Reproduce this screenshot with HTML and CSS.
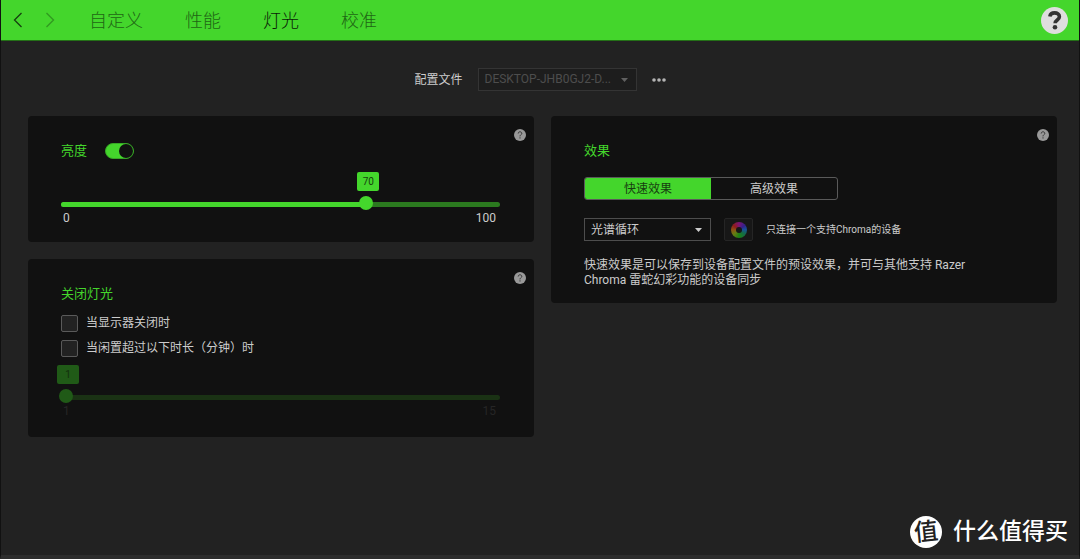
FILE: index.html
```html
<!DOCTYPE html>
<html lang="zh-CN">
<head>
<meta charset="utf-8">
<meta name="viewport" content="width=device-width, initial-scale=1">
<title>灯光</title>
<link rel="stylesheet" href="styles.css">
</head>
<body>
<div class="app">
  <header class="topbar">
    <button class="nav-arrow" type="button" aria-label="后退"><svg width="10" height="16" viewBox="0 0 10 16"><path d="M8.500 1 1.500 8l7 7"/></svg></button>
    <button class="nav-arrow" type="button" aria-label="前进" disabled><svg width="10" height="16" viewBox="0 0 10 16"><path d="M1.500 1l7 7-7 7"/></svg></button>
    <nav class="tabs">
      <a class="tab" href="#custom">自定义</a>
      <a class="tab" href="#performance">性能</a>
      <a class="tab tab-active" href="#lighting" aria-current="page">灯光</a>
      <a class="tab" href="#calibration">校准</a>
    </nav>
    <button class="help-main" type="button" aria-label="帮助"><svg width="27" height="27" viewBox="0 0 27 27"><circle cx="13.500" cy="13.500" r="13.500" fill="#dedede"/><path d="M8.800 9.500C9.300 7 11 5.900 13.500 5.900c2.900 0 4.900 1.500 4.900 3.800 0 3.300-4.300 3.200-4.300 6.600" fill="none" stroke="#333" stroke-width="3.600"/><circle cx="14" cy="20.300" r="2.300" fill="#333"/></svg></button>
  </header>

  <main class="content">
    <div class="profile">
      <label for="profile">配置文件</label>
      <div class="select select-profile">
        <select id="profile" disabled><option>DESKTOP-JHB0GJ2-D...</option></select>
        <svg class="caret" width="7" height="4" viewBox="0 0 7 4"><path d="M0 0h7L3.500 4z"/></svg>
      </div>
      <button class="more" type="button" aria-label="更多"><svg width="14" height="4" viewBox="0 0 14 4"><circle cx="2" cy="2" r="1.800"/><circle cx="7" cy="2" r="1.800"/><circle cx="12" cy="2" r="1.800"/></svg></button>
    </div>

    <div class="columns">
      <div class="column">
        <section class="card">
          <button class="help" type="button" aria-label="亮度帮助"><svg width="12" height="12" viewBox="0 0 12 12"><circle cx="6" cy="6" r="6"/><path d="M4.200 4.500C4.300 3.300 5 2.800 6 2.800s1.800.6 1.800 1.600C7.800 5.600 6 5.700 6 7.400M6 8.300v1.200"/></svg></button>
          <div class="title-row">
            <h2 id="brightness-title">亮度</h2>
            <input class="toggle" type="checkbox" role="switch" aria-labelledby="brightness-title" checked>
          </div>
          <div class="slider brightness">
            <output class="bubble" for="brightness" style="left: 70%">70</output>
            <div class="rail">
              <div class="fill" style="width: 70%"></div>
              <input id="brightness" type="range" min="0" max="100" value="70" aria-labelledby="brightness-title">
            </div>
            <div class="limits"><span>0</span><span>100</span></div>
          </div>
        </section>

        <section class="card card-off">
          <button class="help" type="button" aria-label="关闭灯光帮助"><svg width="12" height="12" viewBox="0 0 12 12"><circle cx="6" cy="6" r="6"/><path d="M4.200 4.500C4.300 3.300 5 2.800 6 2.800s1.800.6 1.800 1.600C7.800 5.600 6 5.700 6 7.400M6 8.300v1.200"/></svg></button>
          <h2>关闭灯光</h2>
          <div class="checks">
            <label class="check"><input type="checkbox">当显示器关闭时</label>
            <label class="check"><input type="checkbox">当闲置超过以下时长（分钟）时</label>
          </div>
          <div class="slider idle">
            <output class="bubble" for="idle" style="left: 0%">1</output>
            <div class="rail">
              <input id="idle" type="range" min="1" max="15" value="1" aria-label="闲置时长（分钟）" disabled>
            </div>
            <div class="limits"><span>1</span><span>15</span></div>
          </div>
        </section>
      </div>

      <div class="column">
        <section class="card">
          <button class="help" type="button" aria-label="效果帮助"><svg width="12" height="12" viewBox="0 0 12 12"><circle cx="6" cy="6" r="6"/><path d="M4.200 4.500C4.300 3.300 5 2.800 6 2.800s1.800.6 1.800 1.600C7.800 5.600 6 5.700 6 7.400M6 8.300v1.200"/></svg></button>
          <h2>效果</h2>
          <div class="segments">
            <button class="segment segment-active" type="button" aria-pressed="true">快速效果</button>
            <button class="segment" type="button" aria-pressed="false">高级效果</button>
          </div>
          <div class="effect-row">
            <div class="select select-effect">
              <select aria-label="快速效果"><option>光谱循环</option></select>
              <svg class="caret" width="7" height="4" viewBox="0 0 7 4"><path d="M0 0h7L3.500 4z"/></svg>
            </div>
            <button class="wheel-button" type="button" aria-label="颜色" disabled><span class="wheel"></span></button>
            <span class="note">只连接一个支持Chroma的设备</span>
          </div>
          <p class="description">快速效果是可以保存到设备配置文件的预设效果，并可与其他支持 Razer Chroma 雷蛇幻彩功能的设备同步</p>
        </section>
      </div>
    </div>
  </main>

  <div class="watermark"><span class="seal"><span class="seal-char">值</span></span>什么值得买</div>
</div>
</body>
</html>
```

FILE: styles.css
```css
* {
  box-sizing: border-box;
}

body {
  margin: 0;
  background: #222;
  color: #ccc;
  font-family: Roboto, "Noto Sans CJK SC", sans-serif;
  font-size: 12px;
  line-height: 15px;
}

button,
select {
  margin: 0;
  padding: 0;
  border: 0;
  background: none;
  color: inherit;
  font: inherit;
}

svg {
  display: block;
}

.app {
  position: relative;
  min-height: 100vh;
  border: solid #111;
  border-width: 0 1px;
  border-bottom: 4px solid #2d2d2d;
}

.topbar {
  display: flex;
  align-items: center;
  height: 41px;
  padding: 0 11px 0 12px;
  background: #44d62c;
  border-bottom: 1px solid #247017;
}

.nav-arrow {
  margin-right: 22px;
  color: #163f10;
}

.nav-arrow:disabled {
  opacity: 0.4;
}

.nav-arrow path {
  fill: none;
  stroke: currentColor;
  stroke-width: 1.3;
}

.tabs {
  display: flex;
  gap: 42px;
  margin-left: 12px;
  padding-top: 2px;
}

.tab {
  color: #1f6614;
  font-size: 18px;
  font-weight: 300;
  line-height: 24px;
  text-decoration: none;
}

.tab-active {
  color: #0a1c07;
}

.help-main {
  margin-left: auto;
}

.content {
  padding: 27px 22px 18px 27px;
}

.profile {
  display: flex;
  align-items: center;
  justify-content: center;
  gap: 15px;
  margin-bottom: 25px;
  padding-right: 5px;
}

.profile label {
  padding-top: 2px;
}

.more {
  fill: #b4b4b4;
}

.select {
  position: relative;
  height: 23px;
}

.select select {
  width: 100%;
  height: 100%;
  padding: 1px 24px 0 6px;
  border: 1px solid #4d4d4d;
  appearance: none;
}

.select option {
  background: #111;
}

.select-profile {
  width: 159px;
}

.select-profile select {
  padding-top: 0;
  border-color: #343434;
  background: #1d1d1d;
  color: #4d4d4d;
  opacity: 1;
}

.caret {
  position: absolute;
  top: 10px;
  right: 9px;
  fill: #ccc;
  pointer-events: none;
}

.select-profile .caret {
  fill: #606060;
}

.columns {
  display: grid;
  grid-template-columns: 1fr 1fr;
  align-items: start;
  gap: 17px;
}

.column {
  display: grid;
  gap: 17px;
}

.card {
  position: relative;
  padding: 25px 34px 15px 33px;
  border-radius: 4px;
  background: #111;
}

.help {
  position: absolute;
  top: 13px;
  right: 8px;
}

.help circle {
  fill: #999;
}

.help path {
  fill: none;
  stroke: #333;
  stroke-width: 1;
}

h2 {
  margin: 0;
  color: #44d62c;
  font-size: 13px;
  font-weight: 400;
  line-height: 20px;
}

.title-row {
  display: flex;
  align-items: center;
  gap: 18px;
}

.toggle {
  width: 29px;
  height: 16px;
  margin: 0;
  border: 1px solid #37a825;
  border-radius: 8px;
  background: #44d62c;
  appearance: none;
}

.toggle::before {
  display: block;
  width: 14px;
  height: 14px;
  border-radius: 50%;
  background: #111;
  content: "";
}

.toggle:checked::before {
  margin-left: auto;
}

.slider {
  position: relative;
  padding-top: 30px;
}

.brightness {
  margin-top: 11px;
  padding-bottom: 1px;
}

.bubble {
  position: absolute;
  top: 0;
  width: 22px;
  height: 19px;
  margin-left: -4px;
  border-radius: 2px;
  background: #44d62c;
  color: #174010;
  font-size: 10px;
  line-height: 20px;
  text-align: center;
}

.brightness .bubble {
  margin-left: -11px;
}

.rail {
  position: relative;
  height: 5px;
  border-radius: 3px;
  background: #2b7a1f;
}

.fill {
  height: 5px;
  border-radius: 3px;
  background: #44d62c;
}

.rail input {
  position: absolute;
  top: -6px;
  left: -2px;
  width: calc(100% + 4px);
  height: 14px;
  margin: 0;
  background: none;
  appearance: none;
}

.rail input::-webkit-slider-thumb {
  width: 14px;
  height: 14px;
  border-radius: 50%;
  background: #44d62c;
  appearance: none;
}

.limits {
  display: flex;
  justify-content: space-between;
  padding: 4px 4px 0 2px;
}

.card-off {
  padding-bottom: 18px;
}

.checks {
  display: grid;
  gap: 8px;
  margin-top: 10px;
}

.check {
  display: flex;
  align-items: center;
  gap: 8px;
  padding-top: 1px;
  line-height: 17px;
}

.checks .check + .check {
  padding-top: 0;
}

.check input {
  width: 17px;
  height: 17px;
  margin: 0;
  border: 1px solid #5a5a5a;
  border-radius: 2px;
  background: #222;
  appearance: none;
}

.check input:checked {
  background: #44d62c;
}

.idle {
  margin-top: 8px;
}

.idle .bubble {
  background: #205a17;
  color: #122f0d;
}

.idle .rail {
  background: #1a3214;
}

.idle input::-webkit-slider-thumb {
  background: #205a17;
}

.idle .limits {
  color: #262626;
}

.segments {
  display: flex;
  width: 254px;
  height: 23px;
  margin-top: 16px;
  border: 1px solid #5a5a5a;
  border-radius: 3px;
  overflow: hidden;
}

.segment {
  flex: 1;
  padding-top: 1px;
}

.segment-active {
  background: #44d62c;
  color: #174010;
}

.effect-row {
  display: flex;
  align-items: center;
  margin-top: 18px;
}

.select-effect {
  width: 127px;
}

.wheel-button {
  display: grid;
  place-items: center;
  width: 29px;
  height: 23px;
  margin: 0 13px;
  border: 1px solid #252525;
  border-radius: 2px;
  background: #171717;
}

.wheel {
  display: grid;
  place-items: center;
  width: 16px;
  height: 16px;
  border-radius: 50%;
  background: conic-gradient(#7b1474, #35208a 50deg, #17509a 85deg, #146a4a 125deg, #1c8214 180deg, #667c12 230deg, #8c5414 270deg, #8f1b1b 310deg, #7b1474);
}

.wheel::before {
  width: 6px;
  height: 6px;
  border-radius: 50%;
  background: #171717;
  content: "";
}

.note {
  font-size: 10px;
}

.description {
  max-width: 390px;
  margin: 17px 0 0;
}

.watermark {
  position: absolute;
  right: 11px;
  bottom: 7px;
  display: flex;
  align-items: center;
  gap: 11px;
  color: #fff;
  font-size: 23px;
  font-weight: 500;
  line-height: 32px;
}

.seal {
  display: grid;
  place-items: center;
  width: 32px;
  height: 32px;
  border-radius: 50%;
  background: #fff;
  color: #222;
}

.seal-char {
  font-size: 24px;
  font-weight: 500;
  transform: rotate(-6deg);
}
```
